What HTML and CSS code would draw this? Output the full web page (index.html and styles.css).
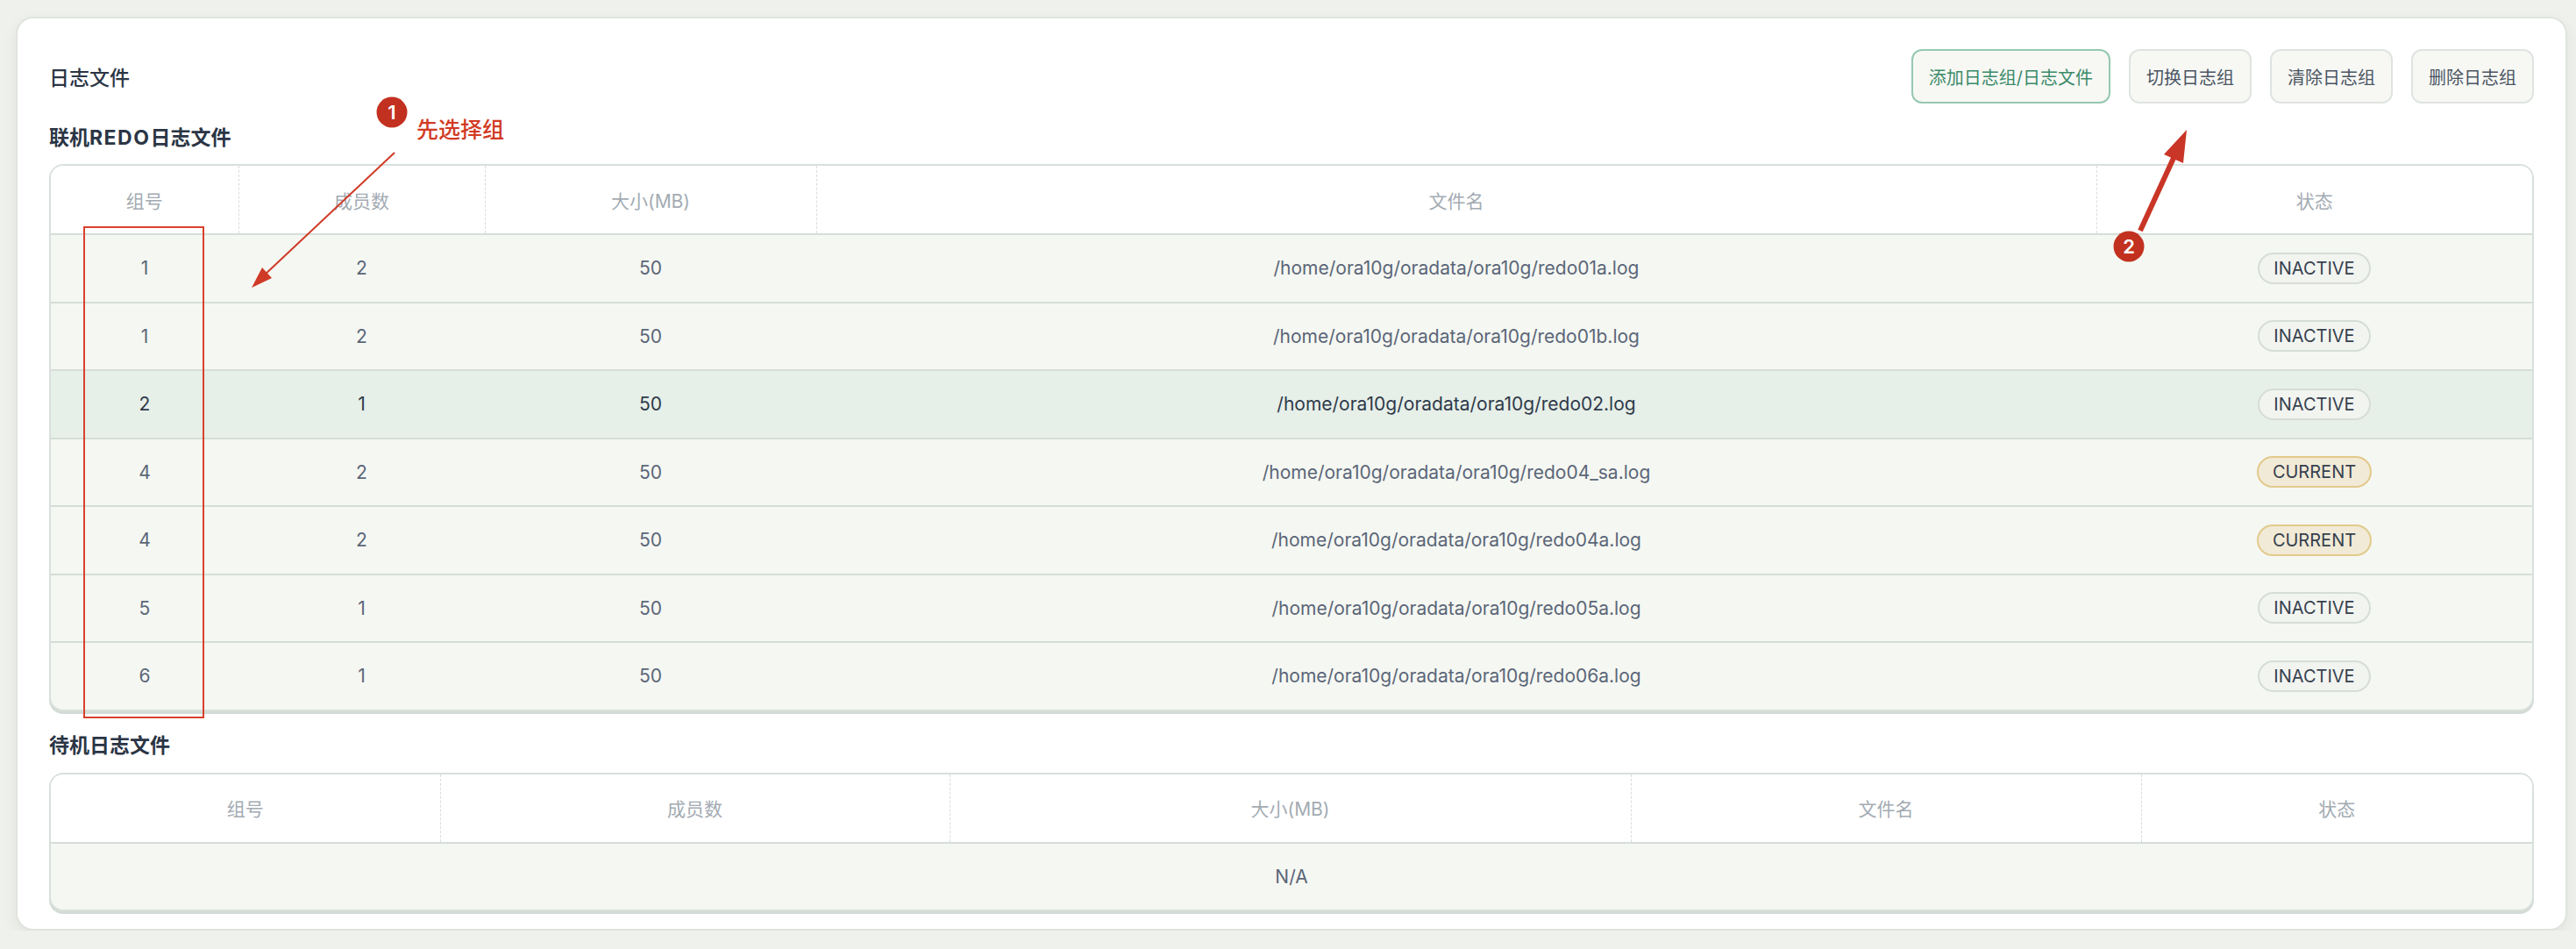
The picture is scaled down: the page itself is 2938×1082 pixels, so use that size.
FILE: index.html
```html
<!doctype html>
<html>
<head>
<meta charset="utf-8">
<title>日志文件</title>
<link rel="stylesheet" href="styles.css">
</head>
<body>
<div class="card">
	<div class="top">
		<h2 class="title">日志文件</h2>
		<div class="btns">
			<button class="btn btn-main">添加日志组/日志文件</button>
			<button class="btn">切换日志组</button>
			<button class="btn">清除日志组</button>
			<button class="btn">删除日志组</button>
		</div>
	</div>

	<h3 class="sub sub-first">联机<span class="en">REDO</span>日志文件</h3>
	<div class="tbl">
		<table>
			<colgroup>
				<col style="width:214px"><col style="width:281px"><col style="width:378px"><col style="width:1460px"><col>
			</colgroup>
			<thead>
				<tr><th>组号</th><th>成员数</th><th>大小(MB)</th><th>文件名</th><th>状态</th></tr>
			</thead>
			<tbody>
				<tr><td>1</td><td>2</td><td>50</td><td>/home/ora10g/oradata/ora10g/redo01a.log</td><td><span class="tag">INACTIVE</span></td></tr>
				<tr><td>1</td><td>2</td><td>50</td><td>/home/ora10g/oradata/ora10g/redo01b.log</td><td><span class="tag">INACTIVE</span></td></tr>
				<tr class="on"><td>2</td><td>1</td><td>50</td><td>/home/ora10g/oradata/ora10g/redo02.log</td><td><span class="tag">INACTIVE</span></td></tr>
				<tr><td>4</td><td>2</td><td>50</td><td>/home/ora10g/oradata/ora10g/redo04_sa.log</td><td><span class="tag tag-cur">CURRENT</span></td></tr>
				<tr><td>4</td><td>2</td><td>50</td><td>/home/ora10g/oradata/ora10g/redo04a.log</td><td><span class="tag tag-cur">CURRENT</span></td></tr>
				<tr><td>5</td><td>1</td><td>50</td><td>/home/ora10g/oradata/ora10g/redo05a.log</td><td><span class="tag">INACTIVE</span></td></tr>
				<tr><td>6</td><td>1</td><td>50</td><td>/home/ora10g/oradata/ora10g/redo06a.log</td><td><span class="tag">INACTIVE</span></td></tr>
			</tbody>
		</table>
	</div>

	<h3 class="sub">待机日志文件</h3>
	<div class="tbl">
		<table>
			<colgroup>
				<col style="width:444px"><col style="width:581px"><col style="width:777px"><col style="width:582px"><col>
			</colgroup>
			<thead>
				<tr><th>组号</th><th>成员数</th><th>大小(MB)</th><th>文件名</th><th>状态</th></tr>
			</thead>
			<tbody>
				<tr><td colspan="5">N/A</td></tr>
			</tbody>
		</table>
	</div>
</div>

<!-- annotations drawn over the screenshot -->
<svg class="marks" width="2938" height="1082" viewBox="0 0 2938 1082">
	<rect x="96" y="259" width="136" height="559" fill="none" stroke="#d9412c" stroke-width="2"/>

	<circle cx="447" cy="128" r="17.5" fill="#c2311f"/>
	<text x="447" y="136" class="num">1</text>
	<text x="475" y="157" class="note">先选择组</text>
	<line x1="450" y1="174" x2="300" y2="315" stroke="#cf3a26" stroke-width="2"/>
	<polygon points="287,328 310,317 299,305" fill="#cf3a26"/>

	<circle cx="2428" cy="281" r="17.5" fill="#c2311f"/>
	<text x="2428" y="289" class="num">2</text>
	<line x1="2441" y1="263" x2="2480" y2="178" stroke="#c93526" stroke-width="6"/>
	<polygon points="2494,148 2490,186 2468,176" fill="#c93526"/>
</svg>
</body>
</html>
```

FILE: styles.css
```css
body{
	margin:0;
	background:#eff1ec;
	font-family:Inter, "Noto Sans CJK SC", sans-serif;
	color:#2b3545;
	position:relative;
}
.card{
	box-sizing:border-box;
	width:2910px;
	height:1042px;
	margin:19px 0 0 18px;
	padding:35px 36px 20px 36px;
	background:#fff;
	border:2px solid #e0e4df;
	border-radius:20px;
	box-shadow:0 6px 16px rgba(60,70,60,.08);
}
.top{
	display:flex;
	align-items:center;
	justify-content:space-between;
	height:62px;
}
.title{
	margin:0;
	font-size:23px;
	font-weight:500;
	color:#2b3545;
}
.btns{
	display:flex;
	gap:21px;
}
.btn{
	height:62px;
	padding:0 18px;
	font:20px Inter, "Noto Sans CJK SC", sans-serif;
	color:#4b5563;
	background:#f7f8f4;
	border:2px solid #dfe4e0;
	border-radius:12px;
}
.btn-main{
	color:#3b8a69;
	border-color:#95c8b1;
}
.sub{
	margin:24px 0 16px;
	font-size:23px;
	line-height:30px;
	font-weight:700;
	color:#2b3545;
}
.sub .en{
	letter-spacing:1.5px;
}
.sub-first{
	margin-top:24px;
	margin-bottom:15px;
}
.tbl{
	border:2px solid #d9e0dc;
	border-radius:16px;
	overflow:hidden;
	box-shadow:0 3px 0 #d3dbd6;
	background:#f5f7f2;
}
table{
	width:100%;
	border-collapse:collapse;
	table-layout:fixed;
}
th{
	height:77px;
	padding:0;
	background:#fff;
	font-size:21px;
	font-weight:400;
	color:#a3abb3;
	border-bottom:2px solid #d5ddd8;
}
th + th{
	border-left:1px dashed #d8dde0;
}
td{
	height:75.5px;
	padding:0;
	text-align:center;
	font-size:21px;
	color:#5b6678;
}
tbody tr + tr td{
	border-top:2px solid #d5ddd8;
}
tr.on td{
	background:#e6efe8;
	color:#2f3a4a;
}
.tag{
	display:inline-block;
	height:32px;
	line-height:32px;
	padding:0 16px;
	font-size:20px;
	color:#36414f;
	background:#f2f4f0;
	border:2px solid #d6ddd8;
	border-radius:18px;
}
.tag-cur{
	background:#f1ead6;
	border-color:#e2ca8c;
}
.marks{
	position:absolute;
	left:0;
	top:0;
	pointer-events:none;
}
.num{
	fill:#fff;
	font-size:22px;
	font-weight:600;
	text-anchor:middle;
	font-family:Inter, sans-serif;
}
.note{
	fill:#d23a24;
	font-size:25px;
	font-weight:500;
	font-family:"Noto Sans CJK SC", sans-serif;
}
```
